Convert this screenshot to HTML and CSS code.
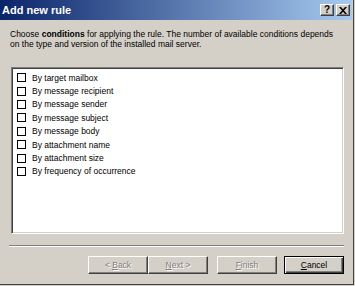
FILE: index.html
```html
<!DOCTYPE html>
<html>
<head>
<meta charset="utf-8">
<link rel="stylesheet" href="styles.css">
</head>
<body>
<div class="window">
  <div class="titlebar">
    <span class="title">Add new rule</span>
    <div class="controls">
      <span class="ctl">?</span>
      <span class="ctl">
        <svg width="8" height="7" viewBox="0 0 8 7"><path d="M0 0h2l2 2.3L6 0h2L5 3.5 8 7H6L4 4.7 2 7H0l3-3.5z" fill="#000"/></svg>
      </span>
    </div>
  </div>
  <div class="body">
    <div class="desc">
      <span class="line">Choose <b>conditions</b> for applying the rule. The number of available conditions depends</span>
      <span class="line">on the type and version of the installed mail server.</span>
    </div>
    <div class="list">
      <label class="item"><span class="box"></span>By target mailbox</label>
      <label class="item"><span class="box"></span>By message recipient</label>
      <label class="item"><span class="box"></span>By message sender</label>
      <label class="item"><span class="box"></span>By message subject</label>
      <label class="item"><span class="box"></span>By message body</label>
      <label class="item"><span class="box"></span>By attachment name</label>
      <label class="item"><span class="box"></span>By attachment size</label>
      <label class="item"><span class="box"></span>By frequency of occurrence</label>
    </div>
    <div class="sep"></div>
    <div class="buttons">
      <span class="btn dis"><span>&lt; <u>B</u>ack</span></span>
      <span class="btn dis"><span><u>N</u>ext &gt;</span></span>
      <span class="btn dis gap"><span><u>F</u>inish</span></span>
      <span class="btn def"><span><u>C</u>ancel</span></span>
    </div>
  </div>
</div>
</body>
</html>
```

FILE: styles.css
```css
html, body {
  margin: 0;
  padding: 0;
  background: #d4d0c8;
  width: 355px;
  height: 286px;
  overflow: hidden;
  font-family: "Liberation Sans", Arial, sans-serif;
  font-size: 8.5px;
  color: #000;
}
* {
  box-sizing: border-box;
}
.window {
  width: 354px;
  height: 285px;
  border-right: 1px solid #404040;
  border-bottom: 1px solid #404040;
  background: #d4d0c8;
  display: flex;
  flex-direction: column;
}
.titlebar {
  height: 20px;
  flex: none;
  margin-right: 1px;
  background: linear-gradient(to right, #0a246a, #a6caf0);
  display: flex;
  align-items: center;
  padding-left: 2px;
}
.title {
  color: #fff;
  font-weight: bold;
  font-size: 11px;
}
.controls {
  margin-left: auto;
  display: flex;
  gap: 2px;
  padding-right: 2px;
}
.ctl {
  width: 14px;
  height: 12px;
  background: #d4d0c8;
  border-top: 1px solid #fff;
  border-left: 1px solid #fff;
  border-right: 1px solid #404040;
  border-bottom: 1px solid #404040;
  box-shadow: inset -1px -1px 0 #808080;
  display: flex;
  align-items: center;
  justify-content: center;
  font-weight: bold;
  font-size: 10px;
  line-height: 1;
}
.body {
  flex: 1;
  padding: 0 9px 0 10px;
  display: flex;
  flex-direction: column;
}
.desc {
  margin-top: 9px;
  line-height: 10px;
  display: flex;
  flex-direction: column;
}
.line {
  display: block;
  white-space: nowrap;
}
.list {
  margin-top: 18px;
  margin-left: 1px;
  height: 167px;
  flex: none;
  background: #fff;
  border-top: 1px solid #808080;
  border-left: 1px solid #808080;
  border-right: 1px solid #fff;
  border-bottom: 1px solid #fff;
  box-shadow: inset 1px 1px 0 #404040, inset -1px -1px 0 #d4d0c8;
  padding: 3px 0 0 5px;
  display: flex;
  flex-direction: column;
}
.item {
  display: flex;
  align-items: center;
  height: 13.4px;
  flex: none;
}
.box {
  width: 9px;
  height: 9px;
  border: 1px solid #000;
  margin-right: 6px;
  background: #fff;
}
.sep {
  margin-top: 11px;
  margin-left: -1px;
  height: 2px;
  flex: none;
  border-top: 1px solid #808080;
  border-bottom: 1px solid #fff;
}
.buttons {
  margin-top: 9px;
  display: flex;
  justify-content: flex-end;
}
.btn {
  width: 60px;
  height: 18px;
  display: flex;
  align-items: center;
  justify-content: center;
  background: #d4d0c8;
  border-top: 1px solid #fff;
  border-left: 1px solid #fff;
  border-right: 1px solid #404040;
  border-bottom: 1px solid #404040;
  box-shadow: inset -1px -1px 0 #808080;
}
.btn.gap {
  margin-left: 9px;
}
.btn.dis {
  color: #808080;
  text-shadow: 1px 1px 0 #fff;
}
.btn.def {
  margin-left: 7px;
  border: 1px solid #000;
  box-shadow: inset 1px 1px 0 #fff, inset -1px -1px 0 #404040, inset -2px -2px 0 #808080;
}
```
